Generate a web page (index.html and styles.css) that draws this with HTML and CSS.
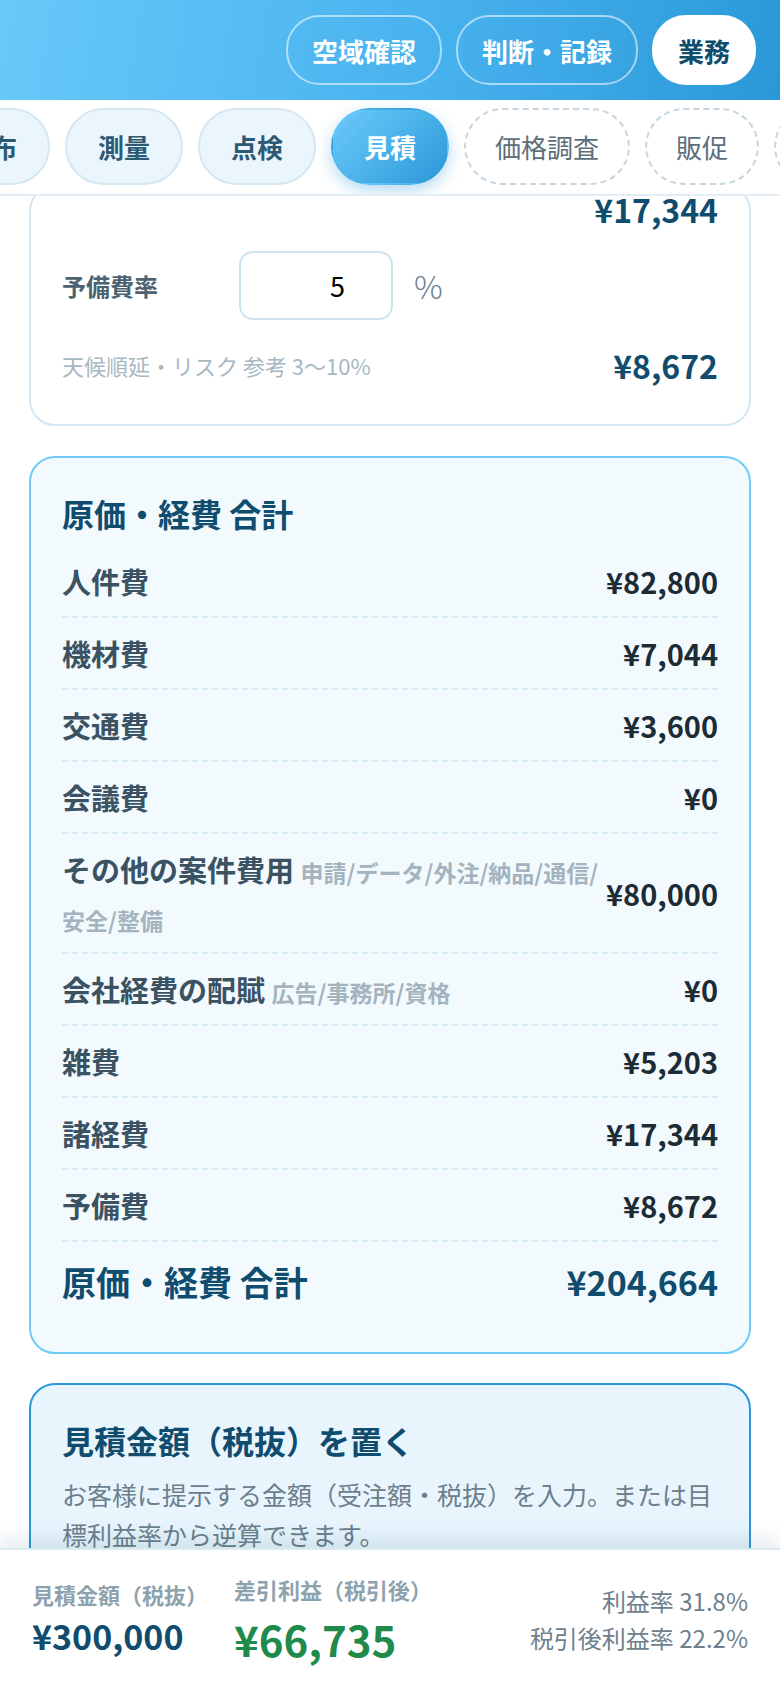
FILE: index.html
```html
<!DOCTYPE html>
<html lang="ja">
<head>
  <meta charset="UTF-8" />
  <meta name="viewport" content="width=device-width, initial-scale=1.0"/>
  <title>業務 - 見積</title>
  <link rel="stylesheet" href="styles.css">
</head>
<body>
<div class="app">

  <header class="topbar">
    <nav class="modes">
      <button class="mode">空域確認</button>
      <button class="mode">判断・記録</button>
      <button class="mode active">業務</button>
    </nav>
  </header>

  <div class="tabs">
    <div class="tab-strip">
      <button class="tab first">散布</button>
      <button class="tab">測量</button>
      <button class="tab">点検</button>
      <button class="tab current">見積</button>
      <button class="tab todo">価格調査</button>
      <button class="tab todo">販促</button>
      <button class="tab todo">集客</button>
    </div>
  </div>

  <main class="content">

    <section class="card card-plain">
      <div class="value-line">¥17,344</div>
      <div class="rate-row">
        <label class="rate-label" for="reserve-rate">予備費率</label>
        <input class="rate-input" id="reserve-rate" type="text" inputmode="numeric" value="5"/>
        <span class="rate-unit">%</span>
      </div>
      <div class="hint-row">
        <span class="hint">天候順延・リスク 参考 3〜10%</span>
        <span class="value-line">¥8,672</span>
      </div>
    </section>

    <section class="card card-sum">
      <h2 class="card-title">原価・経費 合計</h2>
      <ul class="sum-list">
        <li class="sum-row"><span class="sum-label">人件費</span><span class="sum-value">¥82,800</span></li>
        <li class="sum-row"><span class="sum-label">機材費</span><span class="sum-value">¥7,044</span></li>
        <li class="sum-row"><span class="sum-label">交通費</span><span class="sum-value">¥3,600</span></li>
        <li class="sum-row"><span class="sum-label">会議費</span><span class="sum-value">¥0</span></li>
        <li class="sum-row"><span class="sum-label">その他の案件費用 <small>申請/データ/外注/納品/通信/安全/整備</small></span><span class="sum-value">¥80,000</span></li>
        <li class="sum-row"><span class="sum-label">会社経費の配賦 <small>広告/事務所/資格</small></span><span class="sum-value">¥0</span></li>
        <li class="sum-row"><span class="sum-label">雑費</span><span class="sum-value">¥5,203</span></li>
        <li class="sum-row"><span class="sum-label">諸経費</span><span class="sum-value">¥17,344</span></li>
        <li class="sum-row"><span class="sum-label">予備費</span><span class="sum-value">¥8,672</span></li>
      </ul>
      <div class="sum-total">
        <span>原価・経費 合計</span>
        <span class="total-value">¥204,664</span>
      </div>
    </section>

    <section class="card card-quote">
      <h2 class="card-title">見積金額（税抜）を置く</h2>
      <p class="card-desc">お客様に提示する金額（受注額・税抜）を入力。または目標利益率から逆算できます。</p>
    </section>

  </main>

  <footer class="summary">
    <div class="sum-block">
      <div class="sum-caption">見積金額（税抜）</div>
      <div class="sum-price">¥300,000</div>
    </div>
    <div class="sum-block profit">
      <div class="sum-caption">差引利益（税引後）</div>
      <div class="sum-profit">¥66,735</div>
    </div>
    <div class="rates">
      <div>利益率 31.8%</div>
      <div>税引後利益率 22.2%</div>
    </div>
  </footer>

</div>
</body>
</html>
```

FILE: styles.css
```css
* {
  box-sizing: border-box;
}

body {
  margin: 0;
  font-family: "Noto Sans CJK JP", "Noto Sans", sans-serif;
  background-color: #fff;
  color: #1d2b35;
}

button {
  font-family: inherit;
  cursor: pointer;
}

.app {
  height: 100vh;
  display: flex;
  flex-direction: column;
  overflow: hidden;
}

/* top bar */

.topbar {
  height: 100px;
  flex: none;
  display: flex;
  align-items: center;
  justify-content: flex-end;
  padding: 0 24px;
  background: linear-gradient(100deg, #68c9f9 0%, #48b2ee 55%, #2a98d8 100%);
}

.modes {
  display: flex;
  gap: 14px;
}

.mode {
  height: 70px;
  padding: 0 24px;
  border: 2px solid rgba(255, 255, 255, 0.55);
  border-radius: 34px;
  background: transparent;
  color: #fff;
  font-size: 26px;
  font-weight: bold;
}

.mode.active {
  background: #fff;
  border-color: #fff;
  color: #0f4c6e;
}

/* tabs */

.tabs {
  flex: none;
  overflow: hidden;
  padding: 8px 0 9px;
  background: #fff;
  border-bottom: 2px solid #e2edf4;
  position: relative;
  z-index: 1;
}

.tab-strip {
  display: flex;
  gap: 15px;
}

.tab {
  flex: none;
  height: 77px;
  padding: 0 31px;
  border: 2px solid #d4e7f3;
  border-radius: 999px;
  background: #ebf5fc;
  color: #2c5a74;
  font-size: 26px;
  font-weight: bold;
}

.tab.first {
  margin-left: -68px;
}

.tab.current {
  border-color: transparent;
  background: linear-gradient(135deg, #6ccbfa 0%, #2a98d8 100%);
  color: #fff;
  box-shadow: 0 6px 16px rgba(42, 152, 216, 0.35);
}

.tab.todo {
  padding: 0 29px;
  border: 2px dashed #c6d6e0;
  background: #fff;
  color: #5c6e7a;
  font-weight: normal;
}

/* content */

.content {
  flex: 1;
  overflow: hidden;
  padding: 0 29px;
}

.card {
  border: 2px solid #d3e6f1;
  border-radius: 26px;
  background: #fff;
  padding: 33px 31px 32px;
  margin-bottom: 30px;
}

.card-plain {
  margin-top: -11px;
  padding-top: 0;
  padding-bottom: 36px;
}

.value-line {
  font-size: 32px;
  line-height: 1.4;
  font-weight: bold;
  color: #0f4c6e;
  text-align: right;
}

.rate-row {
  display: flex;
  align-items: center;
  margin-top: 19px;
}

.rate-label {
  width: 177px;
  font-size: 24px;
  font-weight: bold;
  color: #4c6271;
}

.rate-input {
  width: 154px;
  height: 69px;
  padding: 0 46px 0 10px;
  border: 2px solid #cfe3ef;
  border-radius: 14px;
  font-family: inherit;
  font-size: 27px;
  color: #000;
  text-align: right;
}

.rate-unit {
  margin-left: 21px;
  font-size: 32px;
  font-weight: 300;
  color: #6d8291;
}

.hint-row {
  display: flex;
  align-items: center;
  justify-content: space-between;
  margin-top: 23px;
}

.hint {
  font-size: 22px;
  color: #a8b8c2;
}

.card-sum {
  border-color: #6fcaf6;
  background: #f3fafe;
  padding-bottom: 35px;
  margin-bottom: 29px;
}

.card-title {
  margin: 0 0 11px;
  font-size: 32px;
  line-height: 1.4;
  font-weight: bold;
  color: #0f4c6e;
}

.sum-list {
  list-style: none;
  margin: 0;
  padding: 0;
}

.sum-row {
  display: flex;
  align-items: center;
  gap: 6px;
  padding: 11px 0;
  border-bottom: 2px dashed #d8eaf4;
  font-size: 29px;
  line-height: 48px;
  font-weight: bold;
}

.sum-label {
  flex: 1;
  color: #3b5263;
}

.sum-label small {
  font-size: 23px;
  line-height: 1;
  color: #a4b4be;
}

.sum-value {
  flex: none;
  color: #1d2b35;
}

.sum-total {
  display: flex;
  justify-content: space-between;
  align-items: center;
  padding: 16px 0 11px;
  font-size: 34px;
  line-height: 48px;
  font-weight: bold;
  color: #0f4c6e;
}

.card-quote {
  border-color: #2a98d8;
  background: #e8f5fd;
}

.card-desc {
  margin: 0;
  font-size: 25px;
  line-height: 40px;
  color: #6b7f8c;
}

/* sticky summary */

.summary {
  flex: none;
  height: 140px;
  display: flex;
  align-items: center;
  padding: 0 32px;
  background: #fff;
  border-top: 2px solid #dbe9f1;
  box-shadow: 0 -8px 22px rgba(15, 76, 110, 0.12);
  position: relative;
  z-index: 2;
}

.sum-caption {
  font-size: 22px;
  line-height: 30px;
  font-weight: bold;
  color: #8ea2ae;
}

.sum-price {
  margin-top: 5px;
  font-size: 34px;
  line-height: 1.3;
  font-weight: bold;
  color: #0f4c6e;
}

.profit {
  margin-left: 26px;
}

.sum-profit {
  margin-top: 10px;
  font-size: 42px;
  line-height: 1.2;
  font-weight: bold;
  color: #1f8a4b;
}

.rates {
  margin-left: auto;
  text-align: right;
  font-size: 24px;
  line-height: 37px;
  color: #6d808c;
}
```
